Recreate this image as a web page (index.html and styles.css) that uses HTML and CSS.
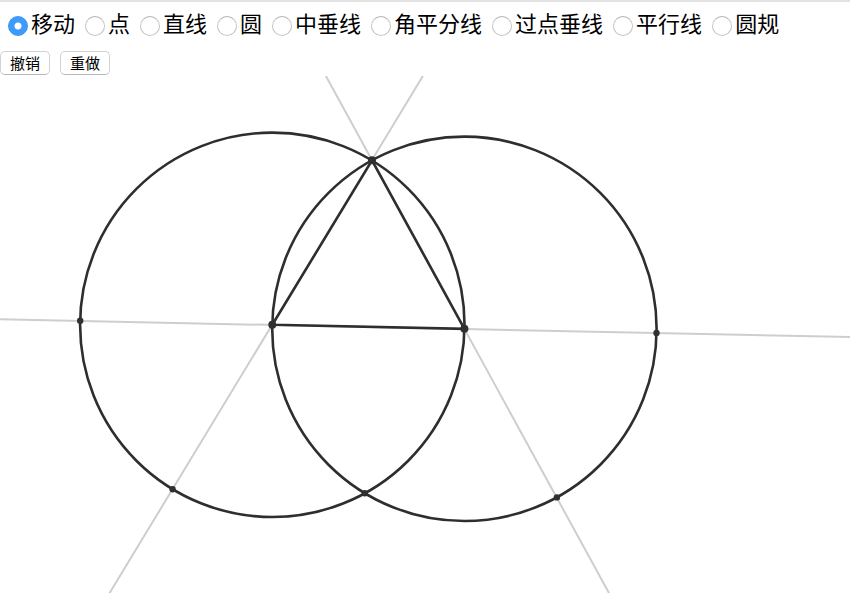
FILE: index.html
```html
<!DOCTYPE html>
<html lang="zh-CN">
<head>
<meta charset="utf-8">
<title>尺规作图</title>
<link rel="stylesheet" href="styles.css">
</head>
<body>
<form class="toolbar">
  <div class="tools">
    <label class="tool"><input type="radio" name="tool" value="move" checked>移动</label>
    <label class="tool"><input type="radio" name="tool" value="point">点</label>
    <label class="tool"><input type="radio" name="tool" value="line">直线</label>
    <label class="tool"><input type="radio" name="tool" value="circle">圆</label>
    <label class="tool"><input type="radio" name="tool" value="bisector">中垂线</label>
    <label class="tool"><input type="radio" name="tool" value="angle">角平分线</label>
    <label class="tool"><input type="radio" name="tool" value="perpendicular">过点垂线</label>
    <label class="tool"><input type="radio" name="tool" value="parallel">平行线</label>
    <label class="tool"><input type="radio" name="tool" value="compass">圆规</label>
  </div>
  <div class="history">
    <button type="button">撤销</button>
    <button type="button">重做</button>
  </div>
</form>
<main class="board">
  <svg class="canvas" viewBox="0 0 850 517" preserveAspectRatio="xMinYMin slice">
    <g class="guide">
      <line x1="0" y1="243.3" x2="850" y2="261"/>
      <line x1="422.9" y1="0" x2="109" y2="518"/>
      <line x1="325.9" y1="0" x2="609.5" y2="518"/>
    </g>
    <g class="stroke">
      <circle cx="272.3" cy="248.8" r="192.2"/>
      <circle cx="464.4" cy="252.8" r="192.2"/>
      <path d="M272.3 248.8L464.4 252.8L372 84.3Z"/>
    </g>
    <g class="dot">
      <circle cx="272.3" cy="248.8" r="4"/>
      <circle cx="464.4" cy="252.8" r="4"/>
      <circle cx="372" cy="84.3" r="4"/>
      <circle cx="80.2" cy="244.8" r="3.2"/>
      <circle cx="656.5" cy="256.9" r="3.2"/>
      <circle cx="172.6" cy="413.2" r="3.2"/>
      <circle cx="364.8" cy="417.2" r="3.2"/>
      <circle cx="556.9" cy="421.4" r="3.2"/>
    </g>
  </svg>
</main>
</body>
</html>
```
FILE: styles.css
```css
* {
  box-sizing: border-box;
}

body {
  margin: 0;
  min-height: 100vh;
  display: flex;
  flex-direction: column;
  background: #fff;
  color: #000;
  font-family: "Noto Sans CJK SC", sans-serif;
}

.toolbar {
  border-top: 2px solid #e2e2e2;
}

.tools {
  display: flex;
  flex-wrap: wrap;
  gap: 0 10px;
  padding: 4px 8px 0;
  font-size: 22px;
  line-height: 32px;
}

.tool {
  display: flex;
  align-items: center;
  gap: 3px;
  white-space: nowrap;
}

.tool input {
  appearance: none;
  width: 20px;
  height: 20px;
  margin: 8px 0 0;
  border: 1px solid #c4c4c4;
  border-top-color: #b4b4b4;
  border-radius: 50%;
  background: #fff;
}

.tool input:checked {
  border-color: #3d96f7;
  background: radial-gradient(circle, #fff 3px, #3d9bfb 4px);
}

.history {
  display: flex;
  gap: 10px;
  padding: 13px 0 1px;
}

.history button {
  height: 24px;
  padding: 0 9px;
  border: 1px solid #d2d2d2;
  border-bottom-color: #b8b8b8;
  border-radius: 5px;
  background: #fff;
  color: #000;
  font: 15px/20px "Noto Sans CJK SC", sans-serif;
}

.board {
  flex: 1;
  display: flex;
}

.canvas {
  display: block;
  width: 100%;
}

.guide {
  stroke: #cecece;
  stroke-width: 2;
}

.stroke {
  fill: none;
  stroke: #2e2e2e;
  stroke-width: 2.6;
}

.dot {
  fill: #303030;
}
```
